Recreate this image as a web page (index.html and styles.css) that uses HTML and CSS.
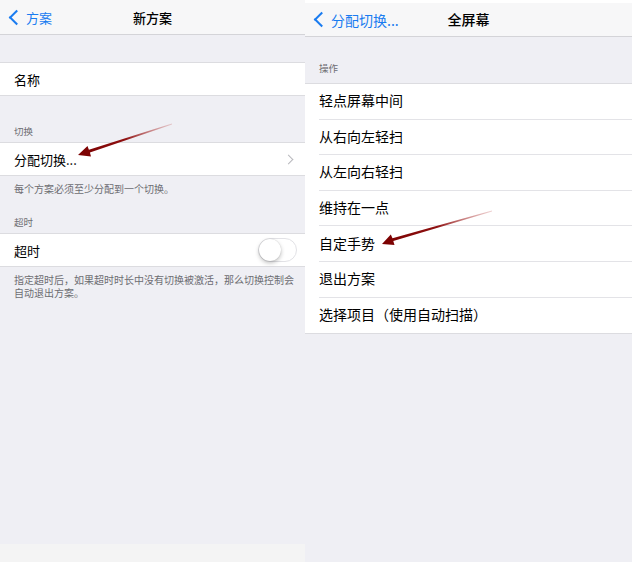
FILE: index.html
```html
<!DOCTYPE html>
<html lang="zh-CN">
<head>
    <meta charset="UTF-8">
    <title>新方案</title>
    <link rel="stylesheet" href="styles.css">
</head>
<body>
    <div class="screens">
        <!-- 左侧：新方案 -->
        <div class="panel left">
            <div class="nav">
                <span class="back"><span class="chev"></span>方案</span>
                <span class="title">新方案</span>
            </div>
            <div class="gap"></div>
            <div class="group">
                <div class="row">名称</div>
            </div>
            <div class="header">切换</div>
            <div class="group">
                <div class="row">分配切换...<span class="arrow-right"></span></div>
            </div>
            <div class="footer">每个方案必须至少分配到一个切换。</div>
            <div class="header">超时</div>
            <div class="group">
                <div class="row">超时<span class="switch"><span class="knob"></span></span></div>
            </div>
            <div class="footer">指定超时后，如果超时时长中没有切换被激活，那么切换控制会自动退出方案。</div>
            <div class="fill"></div>
            <div class="bottom-strip"></div>
        </div>

        <!-- 右侧：全屏幕 -->
        <div class="panel right">
            <div class="nav">
                <span class="back"><span class="chev"></span>分配切换...</span>
                <span class="title">全屏幕</span>
            </div>
            <div class="header tall">操作</div>
            <div class="group list">
                <div class="item">轻点屏幕中间</div>
                <div class="item">从右向左轻扫</div>
                <div class="item">从左向右轻扫</div>
                <div class="item">维持在一点</div>
                <div class="item">自定手势</div>
                <div class="item">退出方案</div>
                <div class="item">选择项目（使用自动扫描）</div>
            </div>
        </div>
    </div>

    <!-- 标注箭头 -->
    <svg class="marks" width="633" height="562" viewBox="0 0 633 562">
        <defs>
            <linearGradient id="fadeL" x1="172" y1="124" x2="78" y2="155" gradientUnits="userSpaceOnUse">
                <stop offset="0" stop-color="#c96b6b" stop-opacity="0.3"/>
                <stop offset="0.5" stop-color="#8e1010"/>
                <stop offset="1" stop-color="#7a0000"/>
            </linearGradient>
            <linearGradient id="fadeR" x1="492" y1="211" x2="382" y2="244" gradientUnits="userSpaceOnUse">
                <stop offset="0" stop-color="#c96b6b" stop-opacity="0.3"/>
                <stop offset="0.5" stop-color="#8e1010"/>
                <stop offset="1" stop-color="#7a0000"/>
            </linearGradient>
        </defs>
        <polygon fill="url(#fadeL)" points="78,155 91,156.5 89.9,152.6 172.1,124.4 171.9,123.6 88.9,149.8 87.5,146"/>
        <polygon fill="url(#fadeR)" points="382,244 394.5,245 393.3,241.1 492.1,211.4 491.9,210.6 392.5,238.3 390.8,234.6"/>
    </svg>
</body>
</html>
```

FILE: styles.css
```css
body {
    margin: 0;
    font-family: "Noto Sans CJK SC", "Noto Sans", sans-serif;
    background-color: #ffffff;
    color: #000;
}
.screens {
    display: flex;
    width: 633px;
    height: 562px;
    overflow: hidden;
}
.panel {
    display: flex;
    flex-direction: column;
    background-color: #efeff4;
    height: 562px;
}
.left {
    width: 305px;
}
.right {
    width: 327px;
    margin-right: 1px;
    border-top: 3px solid #ffffff;
}
.nav {
    position: relative;
    height: 34px;
    background-color: #f7f7f8;
    border-bottom: 1px solid #d4d4d8;
    display: flex;
    align-items: center;
    justify-content: center;
    flex-shrink: 0;
}
.right .nav {
    height: 32px;
    padding-bottom: 1px;
}
.title {
    font-size: 13px;
    font-weight: 500;
}
.right .title {
    font-size: 14px;
}
.back {
    position: absolute;
    left: 10px;
    top: 0;
    bottom: 0;
    display: flex;
    align-items: center;
    color: #1a7cf0;
    font-size: 13px;
}
.right .back {
    font-size: 14px;
    left: 10px;
}
.chev {
    width: 9px;
    height: 9px;
    border-left: 2.5px solid #1a7cf0;
    border-bottom: 2.5px solid #1a7cf0;
    transform: rotate(45deg);
    margin: 0 4px 0 1px;
}
.gap {
    height: 27px;
    flex-shrink: 0;
}
.group {
    background-color: #fff;
    border-top: 1px solid #dcdce0;
    border-bottom: 1px solid #dcdce0;
    flex-shrink: 0;
}
.row {
    height: 32px;
    display: flex;
    align-items: center;
    justify-content: space-between;
    padding: 0 8px 0 14px;
    font-size: 13px;
}
.header {
    height: 18px;
    padding: 28px 0 0 14px;
    font-size: 9.5px;
    color: #6d6d72;
    flex-shrink: 0;
}
.footer + .header {
    padding-top: 20px;
}
.header.tall {
    height: 22px;
    padding-top: 24px;
}
.footer {
    padding: 6px 6px 0 14px;
    font-size: 10px;
    line-height: 13px;
    color: #6d6d72;
    flex-shrink: 0;
}
.arrow-right {
    width: 6px;
    height: 6px;
    border-top: 1px solid #b8b8bd;
    border-right: 1px solid #b8b8bd;
    transform: rotate(45deg);
    margin-right: 5px;
}
.switch {
    position: relative;
    width: 37px;
    height: 22px;
    border: 1px solid #e2e2e6;
    border-radius: 12px;
    background-color: #fff;
}
.knob {
    position: absolute;
    left: 0;
    top: 0;
    width: 22px;
    height: 22px;
    border-radius: 50%;
    background-color: #fff;
    box-shadow: 0 2px 4px rgba(0, 0, 0, 0.25), 0 0 1px rgba(0, 0, 0, 0.2);
}
.fill {
    flex: 1;
}
.bottom-strip {
    height: 18px;
    background-color: #f4f4f4;
    flex-shrink: 0;
}
.list {
    padding-left: 14px;
}
.item {
    height: 35.6px;
    display: flex;
    align-items: center;
    font-size: 14px;
    border-bottom: 1px solid #e3e3e7;
    box-sizing: border-box;
    padding-bottom: 2px;
}
.item:last-child {
    border-bottom: none;
}
.marks {
    position: absolute;
    left: 0;
    top: 0;
    pointer-events: none;
}
```
